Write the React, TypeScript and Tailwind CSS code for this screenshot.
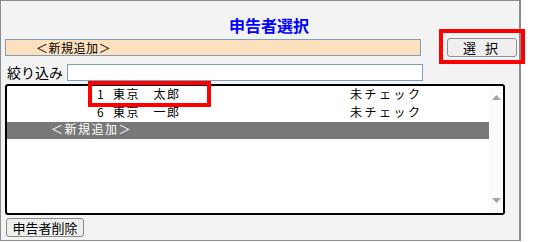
import React from 'react';

interface Row {
  no?: string;
  name: string;
  status?: string;
  selected?: boolean;
}

const rows: Row[] = [
  { no: '1', name: '東京　太郎', status: '未チェック' },
  { no: '6', name: '東京　一郎', status: '未チェック' },
  { name: '＜新規追加＞', selected: true },
];

const font = { fontFamily: '"Noto Sans CJK JP", "Noto Sans", sans-serif' };

const ListRow: React.FC<{ row: Row }> = ({ row }) => {
  if (row.selected) {
    return (
      <div className="h-[17px] bg-[#787878] pl-[44px] text-[12px] leading-[14px] tracking-[1.5px] text-white">
        {row.name}
      </div>
    );
  }
  return (
    <div className="flex h-[18px] pl-[90px] text-[12px] leading-[15px] text-black">
      <span className="w-[16px]">{row.no}</span>
      <span className="w-[237px] tracking-[1.5px]">{row.name}</span>
      <span className="tracking-[2.5px]">{row.status}</span>
    </div>
  );
};

export default function App() {
  return (
    <div className="w-[537px] h-[242px] bg-white" style={font}>
      <div className="relative w-[521px] h-[241px] border border-r-2 border-[#8c8c8c] bg-[#f3f3f3]">
        <div className="h-[37px] pt-[14px] pl-[18px] text-center text-[16px] leading-[20px] font-bold text-[#0000ff]">
          申告者選択
        </div>

        <div className="flex items-start h-[19px]">
          <div className="ml-[4px] mt-[1px] w-[416px] h-[17px] border border-[#7f9db9] bg-[#fde0bd] pl-[30px] text-[12px] leading-[15px] tracking-[0.5px] text-black">
            ＜新規追加＞
          </div>
          <button className="ml-[26px] w-[70px] h-[19px] rounded-[3px] border border-[#8f8f8f] bg-[#efefef] text-[13px] leading-[17px] text-black tracking-[3px]">
            選 択
          </button>
        </div>

        <div className="flex items-center mt-[7px] h-[17px]">
          <span className="ml-[6px] w-[60px] text-[14px] leading-[17px] text-black">絞り込み</span>
          <input className="w-[356px] h-[17px] border border-[#7f9db9] bg-white outline-none" />
        </div>

        <div className="mt-[3px] ml-[4px] flex w-[500px] h-[131px] border-2 border-black rounded-[3px] bg-white overflow-hidden">
          <div className="w-[482px] flex flex-col">
            {rows.map((r, i) => (
              <ListRow key={i} row={r} />
            ))}
          </div>
          <div className="w-[14px] flex flex-col justify-between items-center bg-[#fbfbfb] pt-[9px] pb-[10px]">
            <svg width="9" height="5" viewBox="0 0 9 5">
              <path d="M4.5 0 L9 5 L0 5 Z" fill="#a3a3a3" />
            </svg>
            <svg width="9" height="5" viewBox="0 0 9 5">
              <path d="M0 0 L9 0 L4.5 5 Z" fill="#a3a3a3" />
            </svg>
          </div>
        </div>

        <button className="mt-[3px] ml-[5px] block w-[78px] h-[19px] rounded-[3px] border border-[#8a8a8a] bg-[#efefef] text-[13px] leading-[17px] text-black">
          申告者削除
        </button>

        <div className="absolute left-[438px] top-[28px] w-[86px] h-[35px] border-4 border-[#ff0000]" />
        <div className="absolute left-[87px] top-[80px] w-[123px] h-[26px] border-4 border-[#ff0000]" />
      </div>
    </div>
  );
}
